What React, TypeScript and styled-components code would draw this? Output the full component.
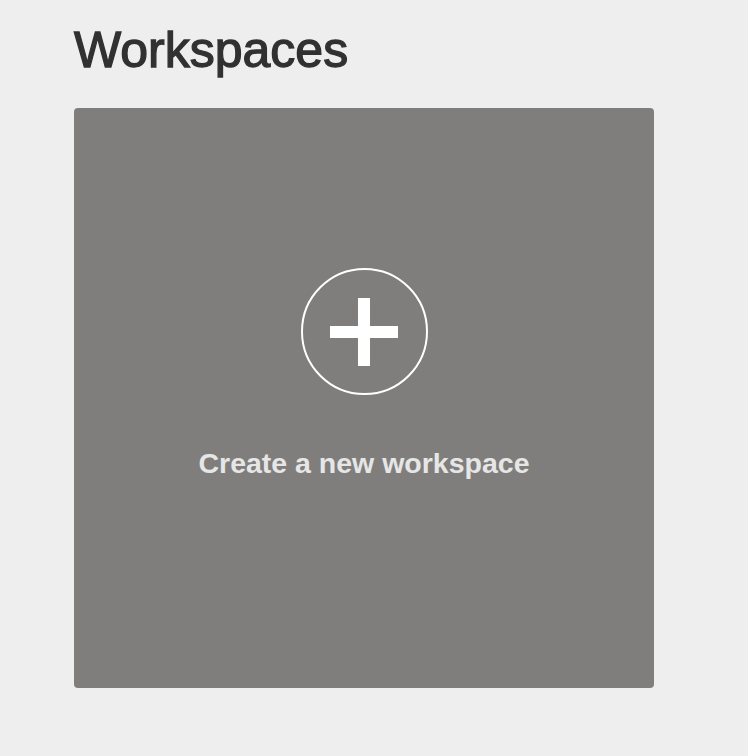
import styled, { createGlobalStyle } from "styled-components";

const GlobalStyle = createGlobalStyle`
  html, body {
    margin: 0;
    padding: 0;
    background: #eeeeee;
  }

  body {
    font-family: "Liberation Sans", Arial, Helvetica, sans-serif;
  }
`;

const Page = styled.div`
  min-height: 756px;
  padding: 25px 0 0 74px;
  box-sizing: border-box;
`;

const Title = styled.h1`
  margin: 0 0 33px;
  font-size: 50px;
  line-height: 1;
  font-weight: 400;
  color: #313131;
  -webkit-text-stroke: 1.3px #313131;
`;

const NewWorkspaceCard = styled.button`
  display: flex;
  flex-direction: column;
  align-items: center;
  width: 580px;
  height: 580px;
  padding: 160px 0 0;
  box-sizing: border-box;
  border: none;
  border-radius: 4px;
  background: #7f7e7c;
  cursor: pointer;
  font-family: inherit;
`;

const PlusCircle = styled.div`
  display: flex;
  align-items: center;
  justify-content: center;
  width: 127px;
  height: 127px;
  box-sizing: border-box;
  border: 2px solid #ffffff;
  border-radius: 50%;
`;

const Label = styled.span`
  margin-top: 54px;
  font-size: 28.5px;
  line-height: 1;
  font-weight: 700;
  color: #e6e6e6;
`;

function PlusIcon() {
  return (
    <svg width="68" height="68" viewBox="0 0 68 68" aria-hidden="true">
      <rect x="28" y="0" width="12" height="68" fill="#ffffff" />
      <rect x="0" y="28" width="68" height="12" fill="#ffffff" />
    </svg>
  );
}

export default function App() {
  return (
    <>
      <GlobalStyle />
      <Page>
        <Title>Workspaces</Title>
        <NewWorkspaceCard type="button">
          <PlusCircle>
            <PlusIcon />
          </PlusCircle>
          <Label>Create a new workspace</Label>
        </NewWorkspaceCard>
      </Page>
    </>
  );
}
